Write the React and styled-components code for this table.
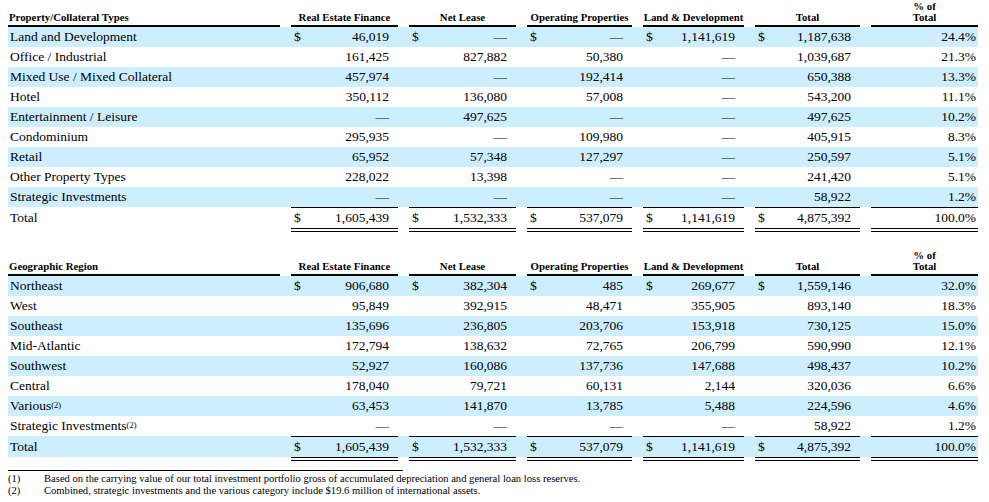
import React from 'react';
import styled, { createGlobalStyle } from 'styled-components';

const GlobalStyle = createGlobalStyle`
  body {
    margin: 0;
    background: #fff;
    color: #000;
    font-family: "Liberation Serif", "Times New Roman", serif;
  }
`;

const COLS = '272px 107px 107px 105px 101px 105px 107px';
const STRIPE = '#cceeff';

const Page = styled.div`
  width: 989px;
  padding: 0 0 0 8px;
  box-sizing: border-box;
`;

const Table = styled.div`
  display: flex;
  flex-direction: column;
  margin-bottom: ${(p) => p.$after || 0}px;
`;

const Row = styled.div`
  display: grid;
  grid-template-columns: ${COLS};
  column-gap: 11px;
  width: 970px;
  background: ${(p) => (p.$shade ? STRIPE : 'transparent')};
`;

const HeadRow = styled(Row)`
  height: 27px;
  align-items: end;
`;

const HeadCell = styled.div`
  font-size: 10.8px;
  font-weight: bold;
  line-height: 11px;
  white-space: nowrap;
  text-align: ${(p) => (p.$left ? 'left' : 'center')};
  padding: 0 0 2px ${(p) => (p.$left ? '1px' : '0')};
  border-bottom: 2px solid #000;
`;

const BodyRow = styled(Row)`
  height: ${(p) => (p.$total ? 21 : 20)}px;
  font-size: 13.5px;
  align-items: stretch;
`;

const Label = styled.div`
  display: flex;
  align-items: center;
  padding-left: 2px;
  white-space: nowrap;

  sup {
    font-size: 8.5px;
    line-height: 0;
    position: relative;
    top: -1px;
  }
`;

const Money = styled.div`
  display: flex;
  align-items: center;
  justify-content: space-between;
  padding: 0 9px 0 3px;
  border-top: ${(p) => (p.$total ? '1px solid #000' : 'none')};
`;

const Percent = styled(Money)`
  justify-content: flex-end;
  padding-right: 2px;
`;

const RuleRow = styled(Row)`
  height: 4px;
`;

const DoubleRule = styled.div`
  border-top: 4px double #000;
`;

const Footnotes = styled.div`
  margin-top: 9px;
  width: 395px;
  border-top: 1px solid #000;
  padding-top: 2px;
  font-size: 10.6px;
  line-height: 12px;
`;

const Note = styled.div`
  display: grid;
  grid-template-columns: 36px 1fr;
  white-space: nowrap;
`;

const HEADS = ['Real Estate Finance', 'Net Lease', 'Operating Properties', 'Land & Development', 'Total'];

const property = [
  ['Land and Development', ['46,019', '—', '—', '1,141,619', '1,187,638'], '24.4%', true],
  ['Office / Industrial', ['161,425', '827,882', '50,380', '—', '1,039,687'], '21.3%'],
  ['Mixed Use / Mixed Collateral', ['457,974', '—', '192,414', '—', '650,388'], '13.3%'],
  ['Hotel', ['350,112', '136,080', '57,008', '—', '543,200'], '11.1%'],
  ['Entertainment / Leisure', ['—', '497,625', '—', '—', '497,625'], '10.2%'],
  ['Condominium', ['295,935', '—', '109,980', '—', '405,915'], '8.3%'],
  ['Retail', ['65,952', '57,348', '127,297', '—', '250,597'], '5.1%'],
  ['Other Property Types', ['228,022', '13,398', '—', '—', '241,420'], '5.1%'],
  ['Strategic Investments', ['—', '—', '—', '—', '58,922'], '1.2%'],
];

const region = [
  ['Northeast', ['906,680', '382,304', '485', '269,677', '1,559,146'], '32.0%', true],
  ['West', ['95,849', '392,915', '48,471', '355,905', '893,140'], '18.3%'],
  ['Southeast', ['135,696', '236,805', '203,706', '153,918', '730,125'], '15.0%'],
  ['Mid-Atlantic', ['172,794', '138,632', '72,765', '206,799', '590,990'], '12.1%'],
  ['Southwest', ['52,927', '160,086', '137,736', '147,688', '498,437'], '10.2%'],
  ['Central', ['178,040', '79,721', '60,131', '2,144', '320,036'], '6.6%'],
  ['Various', ['63,453', '141,870', '13,785', '5,488', '224,596'], '4.6%', false, '(2)'],
  ['Strategic Investments', ['—', '—', '—', '—', '58,922'], '1.2%', false, '(2)'],
];

const totals = ['1,605,439', '1,532,333', '537,079', '1,141,619', '4,875,392'];

const Breakdown = ({ title, rows, after }) => (
  <Table $after={after}>
    <HeadRow>
      <HeadCell $left>{title}</HeadCell>
      {HEADS.map((h) => (
        <HeadCell key={h}>{h}</HeadCell>
      ))}
      <HeadCell>
        % of
        <br />
        Total
      </HeadCell>
    </HeadRow>
    {rows.map(([name, vals, pct, dollar, note], i) => (
      <BodyRow key={name} $shade={i % 2 === 0}>
        <Label>
          {name}
          {note && <sup>{note}</sup>}
        </Label>
        {vals.map((v, j) => (
          <Money key={j}>
            <span>{dollar ? '$' : ''}</span>
            <span>{v}</span>
          </Money>
        ))}
        <Percent>{pct}</Percent>
      </BodyRow>
    ))}
    <BodyRow $total $shade={rows.length % 2 === 0}>
      <Label>Total</Label>
      {totals.map((v, j) => (
        <Money key={j} $total>
          <span>$</span>
          <span>{v}</span>
        </Money>
      ))}
      <Percent $total>100.0%</Percent>
    </BodyRow>
    <RuleRow>
      <div />
      {[0, 1, 2, 3, 4, 5].map((k) => (
        <DoubleRule key={k} />
      ))}
    </RuleRow>
  </Table>
);

export default function App() {
  return (
    <Page>
      <GlobalStyle />
      <Breakdown title="Property/Collateral Types" rows={property} after={17} />
      <Breakdown title="Geographic Region" rows={region} />
      <Footnotes>
        <Note>
          <span>(1)</span>
          <span>Based on the carrying value of our total investment portfolio gross of accumulated depreciation and general loan loss reserves.</span>
        </Note>
        <Note>
          <span>(2)</span>
          <span>Combined, strategic investments and the various category include $19.6 million of international assets.</span>
        </Note>
      </Footnotes>
    </Page>
  );
}
